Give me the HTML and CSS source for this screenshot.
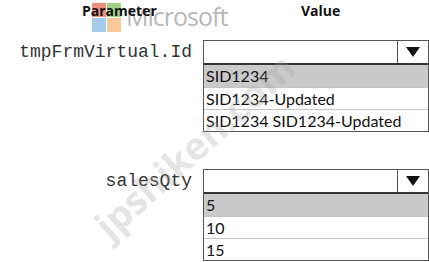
FILE: index.html
```html
<!DOCTYPE html>
<html lang="en">
<head>
    <meta charset="UTF-8">
    <meta name="viewport" content="width=device-width, initial-scale=1.0">
    <title>Parameter values</title>
    <link rel="stylesheet" href="styles.css">
</head>
<body>
    <div class="page">
        <div class="heads">
            <span class="head-param">Parameter</span>
            <span class="head-value">Value</span>
        </div>

        <div class="field">
            <div class="label">tmpFrmVirtual.Id</div>
            <div class="dropdown">
                <div class="select">
                    <div class="select-box"></div>
                    <div class="select-arrow"><span class="tri"></span></div>
                </div>
                <div class="option selected">SID1234</div>
                <div class="option">SID1234-Updated</div>
                <div class="option">SID1234 SID1234-Updated</div>
            </div>
        </div>

        <div class="field second">
            <div class="label">salesQty</div>
            <div class="dropdown">
                <div class="select">
                    <div class="select-box"></div>
                    <div class="select-arrow"><span class="tri"></span></div>
                </div>
                <div class="option selected">5</div>
                <div class="option">10</div>
                <div class="option">15</div>
            </div>
        </div>

        <!-- watermarks -->
        <div class="ms-mark">
            <div class="ms-logo">
                <span class="sq red"></span><span class="sq green"></span>
                <span class="sq blue"></span><span class="sq yellow"></span>
            </div>
            <span class="ms-text">Microsoft</span>
        </div>
        <div class="site-mark">jpshiken.com</div>
    </div>
</body>
</html>
```

FILE: styles.css
```css
body {
    margin: 0;
    background-color: #fff;
}

.page {
    position: relative;
    width: 429px;
    height: 262px;
    overflow: hidden;
}

.heads {
    height: 40px;
    font-family: "Open Sans", sans-serif;
    font-weight: 700;
    font-size: 14px;
    color: #111;
    position: relative;
    z-index: 2;
}
.head-param {
    position: absolute;
    left: 82px;
    top: 1px;
}
.head-value {
    position: absolute;
    left: 301px;
    top: 1px;
}

.field {
    display: flex;
    align-items: flex-start;
}
.field.second {
    margin-top: 37px;
}

.label {
    width: 192px;
    height: 24px;
    line-height: 24px;
    text-align: right;
    font-family: "Liberation Mono", monospace;
    font-size: 18px;
    color: #333;
    margin-right: 11px;
}

.dropdown {
    width: 224px;
    border: 1px solid #555;
}

.select {
    display: flex;
    height: 22px;
    border-bottom: 2px solid #333;
}
.select-box {
    flex: 1;
}
.select-arrow {
    width: 30px;
    border-left: 1px solid #555;
    display: flex;
    justify-content: center;
    align-items: center;
}
.tri {
    width: 0;
    height: 0;
    border-left: 7px solid transparent;
    border-right: 7px solid transparent;
    border-top: 10px solid #111;
}

.option {
    height: 21px;
    line-height: 21px;
    padding-left: 2px;
    font-family: "Lato", sans-serif;
    font-size: 16px;
    color: #111;
    border-top: 1px solid #c4c4c4;
}
.option.selected {
    background-color: #cacaca;
    border-top: none;
    height: 22px;
}

.ms-mark {
    position: absolute;
    left: 92px;
    top: 3px;
    display: flex;
    align-items: flex-end;
    opacity: 0.7;
}
.ms-logo {
    display: grid;
    grid-template-columns: 14px 14px;
    grid-template-rows: 14px 14px;
    gap: 1px;
}
.sq.red { background-color: #e8604a; }
.sq.green { background-color: #7cbd4e; }
.sq.blue { background-color: #7fb6e3; }
.sq.yellow { background-color: #f6b36e; }
.ms-text {
    font-family: "Open Sans", sans-serif;
    font-size: 25px;
    line-height: 25px;
    letter-spacing: -1px;
    color: #999;
    margin-left: 5px;
    margin-bottom: 3px;
}

.site-mark {
    position: absolute;
    left: 100px;
    top: 208px;
    font-family: "Open Sans", sans-serif;
    font-weight: 700;
    font-size: 38px;
    line-height: 44px;
    color: rgba(160, 160, 160, 0.3);
    transform: rotate(-42deg);
    transform-origin: left center;
    white-space: nowrap;
}
```
